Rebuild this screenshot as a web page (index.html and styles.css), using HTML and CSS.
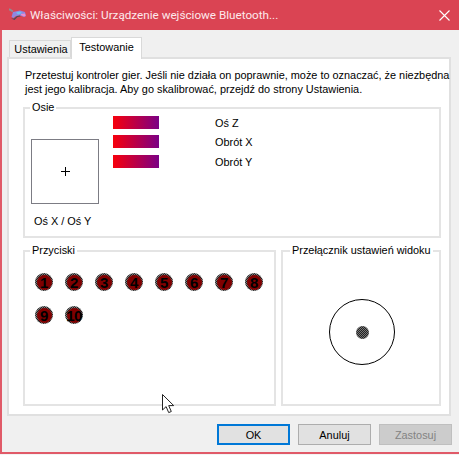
FILE: index.html
```html
<!DOCTYPE html>
<html lang="pl">
<head>
<meta charset="utf-8">
<title>Właściwości</title>
<link rel="stylesheet" href="styles.css">
</head>
<body>
<div class="window">
  <header class="titlebar">
    <svg class="app-icon" width="18" height="14" viewBox="0 0 18 14">
      <path d="M0 1l4 2.5" stroke="#8d8d93" stroke-width="2" fill="none"/>
      <path d="M4 4l7-1.5 5 1.5 1 4-2 1-4-1.5-4 .5-2.5 2-2-1z" fill="#8f88e0"/>
      <path d="M7 4.5l4-1 2 1.500-4 1.500z" fill="#6fc0ee"/>
      <path d="M12 6l4-.5.500 2.500-1.500 .5-3-1.500z" fill="#f08ccc"/>
      <path d="M2 10.500l3.500 1.500 3-3 3-.5-.5-1-3 .5-3 2.500z" fill="#4d4d58"/>
    </svg>
    <span class="title-text">Właściwości: Urządzenie wejściowe Bluetooth...</span>
    <svg class="close" width="11" height="11" viewBox="0 0 11 11">
      <path d="M.5.5l10 10M10.500.5l-10 10" stroke="#fff" stroke-width="1.100" fill="none"/>
    </svg>
  </header>
  <main class="dialog">
    <nav class="tabs">
      <span class="tab">Ustawienia</span>
      <span class="tab tab-active">Testowanie</span>
    </nav>
    <section class="pane">
      <p class="intro">Przetestuj kontroler gier. Jeśli nie działa on poprawnie, może to oznaczać, że niezbędna<br>jest jego kalibracja. Aby go skalibrować, przejdź do strony Ustawienia.</p>
      <div class="group group-axes">
        <span class="legend">Osie</span>
        <div class="xy">
          <div class="xy-box">
            <svg width="9" height="9" viewBox="0 0 9 9"><path d="M4.500 0v9M0 4.500h9" stroke="#000" fill="none"/></svg>
          </div>
          <span class="xy-label">Oś X / Oś Y</span>
        </div>
        <div class="axis-list">
          <div class="axis-row"><span class="bar"></span><span>Oś Z</span></div>
          <div class="axis-row"><span class="bar"></span><span>Obrót X</span></div>
          <div class="axis-row"><span class="bar"></span><span>Obrót Y</span></div>
        </div>
      </div>
      <div class="lower">
        <div class="group group-buttons">
          <span class="legend">Przyciski</span>
          <div class="lamps">
            <span class="lamp">1</span><span class="lamp">2</span><span class="lamp">3</span><span class="lamp">4</span>
            <span class="lamp">5</span><span class="lamp">6</span><span class="lamp">7</span><span class="lamp">8</span>
            <span class="lamp">9</span><span class="lamp">10</span>
          </div>
        </div>
        <div class="group group-pov">
          <span class="legend legend-pov">Przełącznik ustawień widoku</span>
          <div class="pov"><span class="pov-dot"></span></div>
        </div>
      </div>
    </section>
    <footer class="actions">
      <button class="btn btn-default" type="button">OK</button>
      <button class="btn" type="button">Anuluj</button>
      <button class="btn btn-disabled" type="button" disabled>Zastosuj</button>
    </footer>
  </main>
  <svg class="cursor" width="13" height="20" viewBox="0 0 13 20">
    <path d="M.5.500v15.500l3.600-3.400 2.600 6 2.600-1.100-2.600-5.900h5z" fill="#fff" stroke="#222" stroke-width="1"/>
  </svg>
</div>
</body>
</html>
```

FILE: styles.css
```css
* { box-sizing: border-box; }
html, body { margin: 0; padding: 0; background: #f4f4f4; }
body {
  width: 459px;
  height: 455px;
  overflow: hidden;
  font-family: "Liberation Sans", Arial, sans-serif;
  font-size: 10.9px;
  color: #000;
}
.window {
  position: relative;
  width: 459px;
  height: 454px;
  display: flex;
  flex-direction: column;
  background: #f0f0f0;
  border-left: 2px solid #e05a68;
  border-bottom: 2px solid #e05a68;
}
.titlebar {
  height: 30px;
  margin-left: -2px;
  flex: none;
  display: flex;
  align-items: center;
  background: #da4453;
  color: #fde9ec;
  font-family: Roboto, "Liberation Sans", sans-serif;
  font-size: 11.7px;
}
.app-icon { margin-left: 9px; margin-right: 3px; }
.title-text { flex: 1; }
.close { margin-right: 9px; }
.dialog { flex: 1; display: flex; flex-direction: column; }
.tabs {
  height: 27px;
  flex: none;
  display: flex;
  align-items: flex-end;
  padding-left: 7px;
}
.tab {
  width: 62px;
  height: 17px;
  padding-left: 2px;
  text-align: center;
  line-height: 17px;
  background: #f0f0f0;
  border: 1px solid #d9d9d9;
  border-bottom: 0;
}
.tab-active {
  position: relative;
  z-index: 1;
  width: 71px;
  height: 22px;
  margin-bottom: -2px;
  padding-left: 0;
  line-height: 18px;
  background: #fff;
}
.pane {
  width: 444px;
  height: 359px;
  margin-left: 5px;
  flex: none;
  padding: 10px 0 0 14px;
  background: #fff;
  border: 2px solid #e0e0e0;
}
.intro { margin: 0 0 11px 2px; line-height: 13.5px; white-space: nowrap; }
.group { position: relative; border: 2px solid #e4e4e4; }
.legend {
  position: absolute;
  top: -10px;
  left: 5px;
  padding: 0 2px;
  line-height: 16px;
  background: #fff;
  white-space: nowrap;
}
.legend-pov { left: 7px; }
.group-axes { width: 418px; height: 131px; display: flex; }
.xy { width: 74px; margin-left: 6px; padding-top: 30px; flex: none; }
.xy-box {
  width: 68px;
  height: 65px;
  display: flex;
  align-items: center;
  justify-content: center;
  border: 1px solid #7c7c84;
}
.xy-label { display: block; margin: 9px 0 0 3px; line-height: 16px; white-space: nowrap; }
.axis-list { margin-left: 8px; padding-top: 7px; }
.axis-row { display: flex; align-items: center; gap: 56px; height: 13px; margin-bottom: 6px; white-space: nowrap; }
.axis-row:nth-child(2) { margin-bottom: 7px; }
.bar { width: 46px; height: 13px; background: linear-gradient(to right, #f7000c, #7b0085); }
.lower { display: flex; gap: 5px; margin-top: 12px; }
.group-buttons { width: 253px; height: 156px; padding: 21px 0 0 10px; }
.group-pov { width: 160px; height: 156px; padding: 47px 0 0 46px; }
.lamps { display: grid; grid-template-columns: repeat(8, 18px); column-gap: 12px; row-gap: 15px; }
.lamp {
  position: relative;
  isolation: isolate;
  width: 18px;
  height: 18px;
  display: flex;
  align-items: center;
  justify-content: center;
  border-radius: 50%;
  background: repeating-conic-gradient(#222 0 25%, #808080 0 50%) 0 0 / 2px 2px;
  font-family: "Liberation Sans Narrow", "Liberation Sans", sans-serif;
  font-size: 15px;
  font-weight: 700;
  line-height: 1;
  letter-spacing: -0.5px;
  color: #000;
}
.lamp::before {
  content: "";
  position: absolute;
  inset: 1.5px;
  z-index: -1;
  border-radius: 50%;
  background: #800000;
}
.pov {
  width: 66px;
  height: 66px;
  display: flex;
  align-items: center;
  justify-content: center;
  border: 1px solid #000;
  border-radius: 50%;
}
.pov-dot {
  width: 13px;
  height: 13px;
  border-radius: 50%;
  background: repeating-conic-gradient(#222 0 25%, #777 0 50%) 0 0 / 2px 2px;
}
.actions {
  flex: 1;
  display: flex;
  justify-content: flex-end;
  gap: 8px;
  padding: 8px 7px 0 0;
}
.btn {
  width: 73px;
  height: 21px;
  padding: 0;
  font: inherit;
  color: #000;
  background: #e1e1e1;
  border: 1px solid #adadad;
}
.btn-default { border: 2px solid #0078d7; }
.btn-disabled { color: #838383; background: #cccccc; border-color: #bfbfbf; }
.cursor { position: absolute; left: 160px; top: 394px; }
```
